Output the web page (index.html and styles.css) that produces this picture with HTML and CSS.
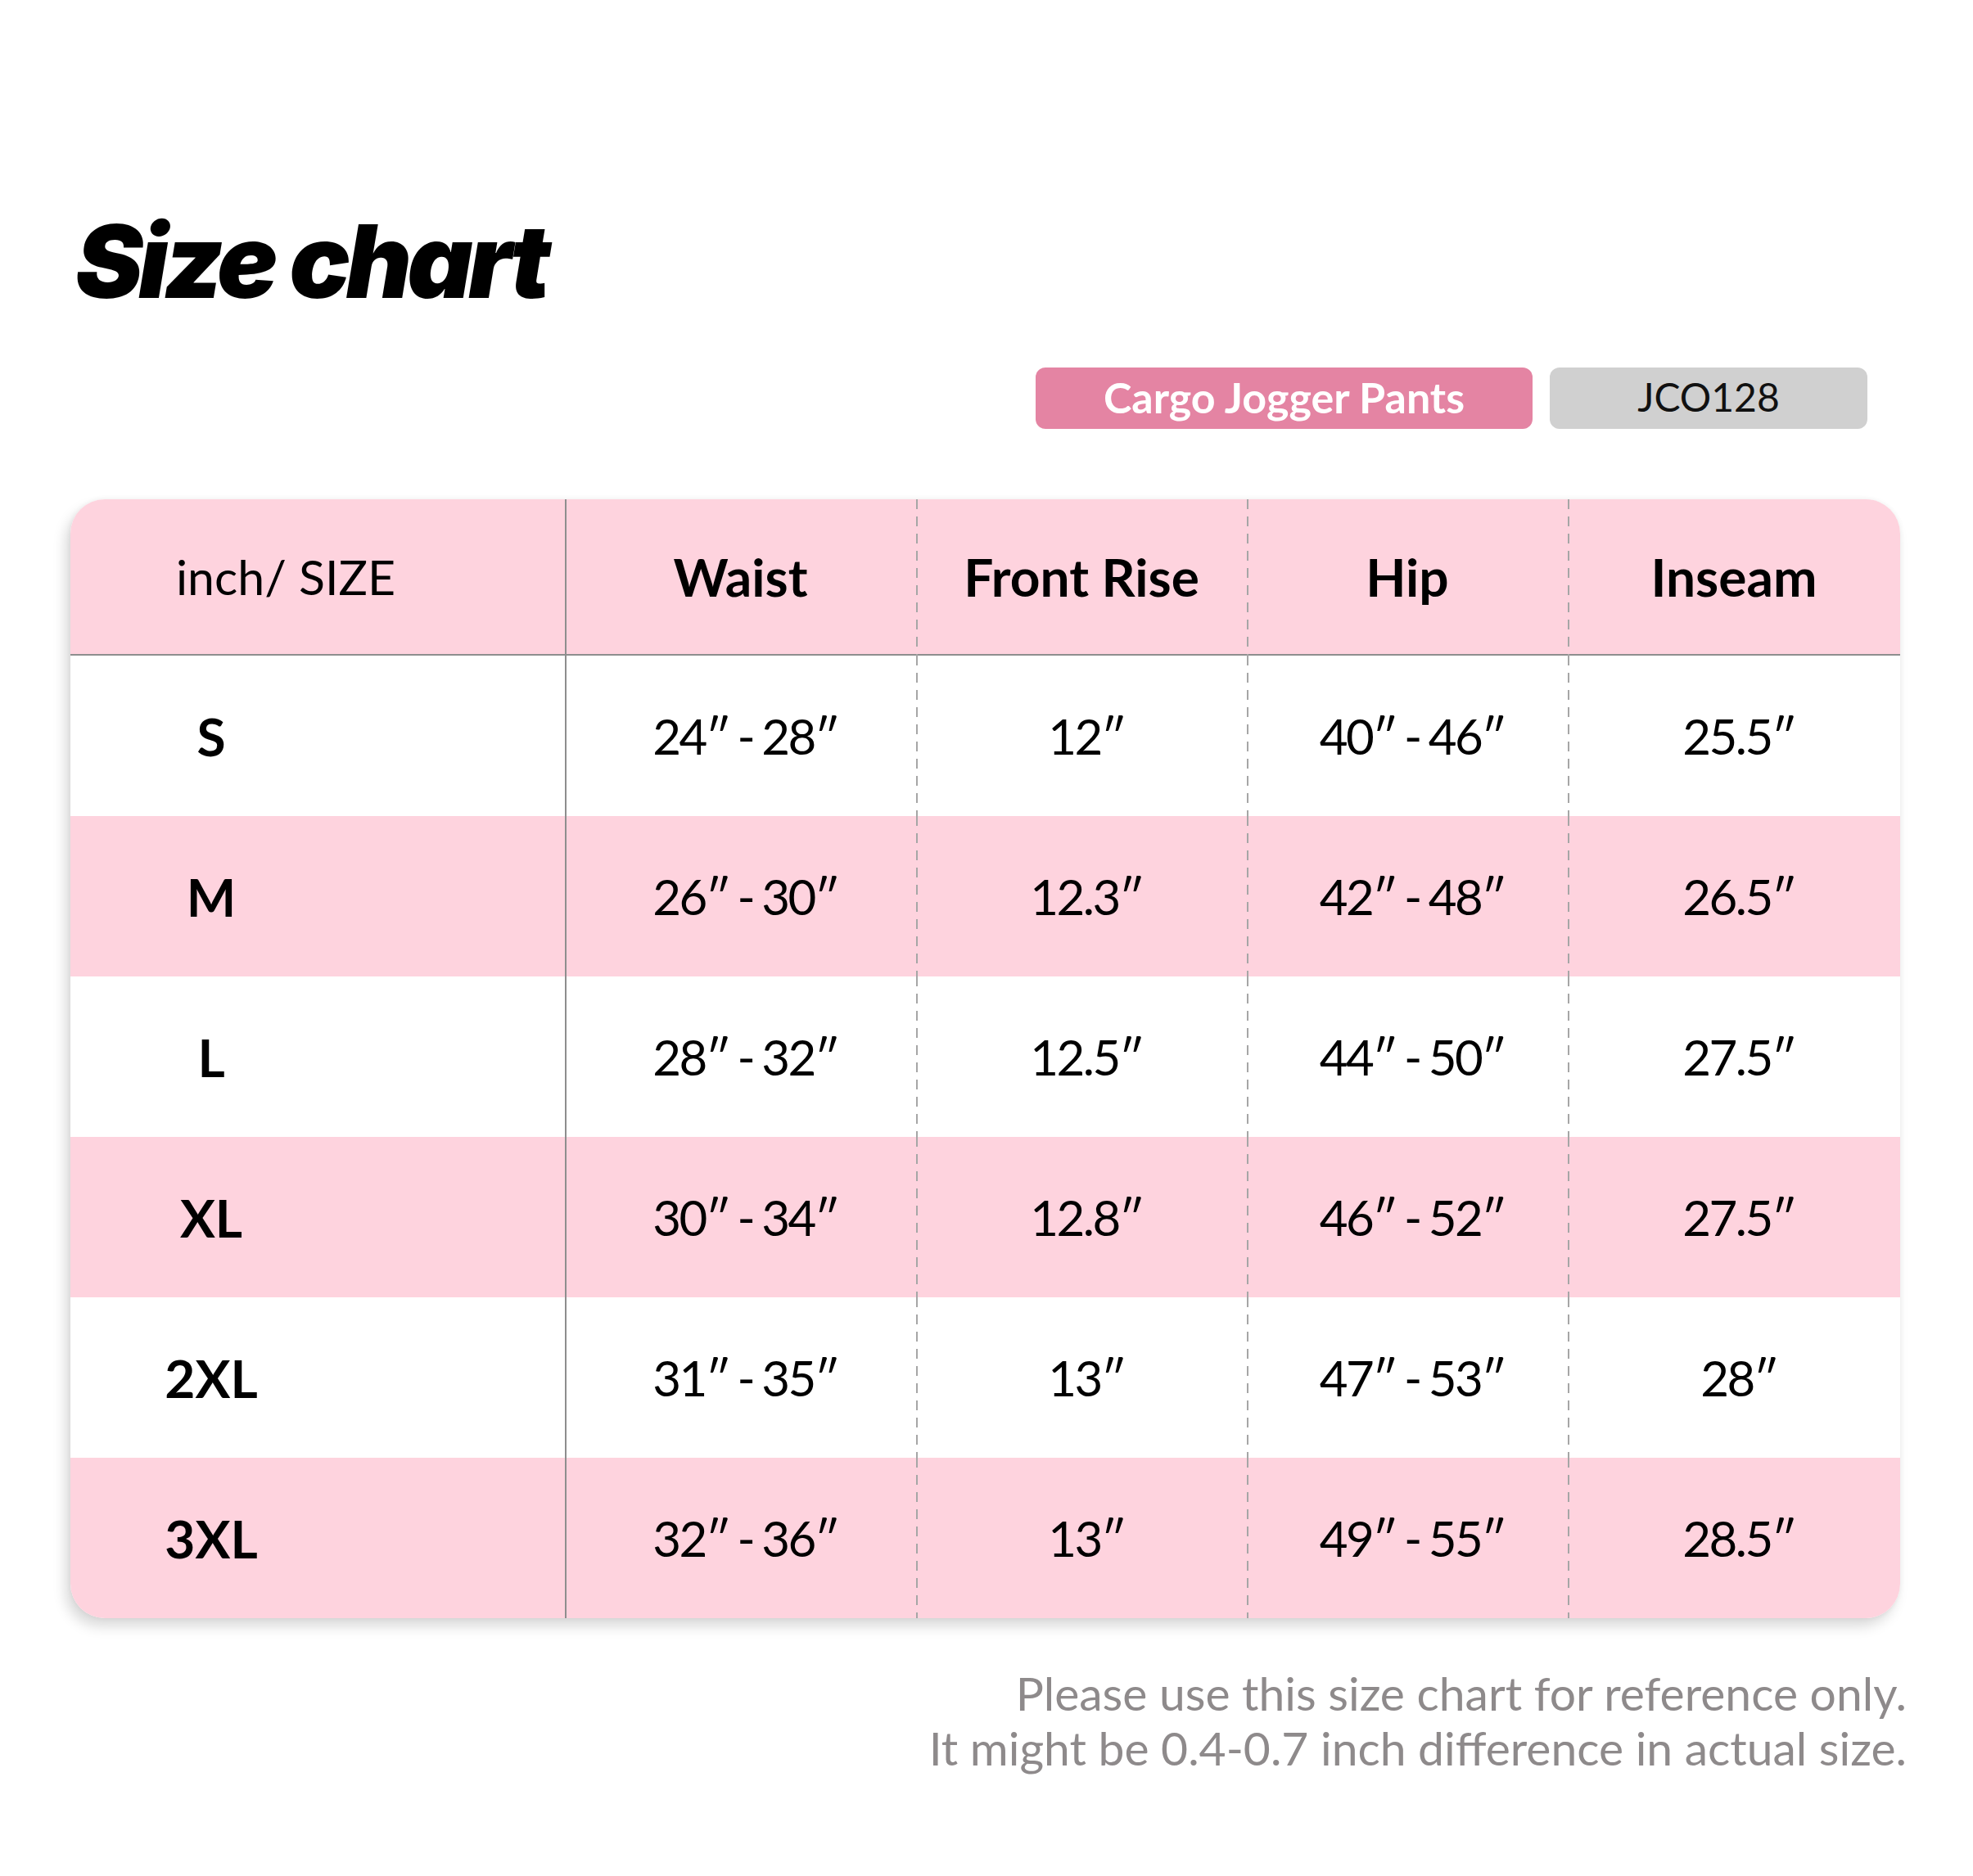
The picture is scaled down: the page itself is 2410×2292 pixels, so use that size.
FILE: index.html
```html
<!DOCTYPE html>
<html lang="en">
<head>
<meta charset="utf-8">
<title>Size chart</title>
<link rel="stylesheet" href="styles.css">
</head>
<body>
<main class="page">
  <h1 class="title">Size chart</h1>

  <div class="tags">
    <span class="tag tag-pink">Cargo Jogger Pants</span>
    <span class="tag tag-gray">JCO128</span>
  </div>

  <div class="chart">
    <div class="row head">
      <div class="cell first"><span class="unit">inch/ SIZE</span></div>
      <div class="cell solid">Waist</div>
      <div class="cell dash">Front Rise</div>
      <div class="cell dash">Hip</div>
      <div class="cell dash">Inseam</div>
    </div>
    <div class="row">
      <div class="cell first"><span class="size">S</span></div>
      <div class="cell solid">24″ - 28″</div>
      <div class="cell dash">12″</div>
      <div class="cell dash">40″ - 46″</div>
      <div class="cell dash">25.5″</div>
    </div>
    <div class="row pink">
      <div class="cell first"><span class="size">M</span></div>
      <div class="cell solid">26″ - 30″</div>
      <div class="cell dash">12.3″</div>
      <div class="cell dash">42″ - 48″</div>
      <div class="cell dash">26.5″</div>
    </div>
    <div class="row">
      <div class="cell first"><span class="size">L</span></div>
      <div class="cell solid">28″ - 32″</div>
      <div class="cell dash">12.5″</div>
      <div class="cell dash">44″ - 50″</div>
      <div class="cell dash">27.5″</div>
    </div>
    <div class="row pink">
      <div class="cell first"><span class="size">XL</span></div>
      <div class="cell solid">30″ - 34″</div>
      <div class="cell dash">12.8″</div>
      <div class="cell dash">46″ - 52″</div>
      <div class="cell dash">27.5″</div>
    </div>
    <div class="row">
      <div class="cell first"><span class="size">2XL</span></div>
      <div class="cell solid">31″ - 35″</div>
      <div class="cell dash">13″</div>
      <div class="cell dash">47″ - 53″</div>
      <div class="cell dash">28″</div>
    </div>
    <div class="row pink">
      <div class="cell first"><span class="size">3XL</span></div>
      <div class="cell solid">32″ - 36″</div>
      <div class="cell dash">13″</div>
      <div class="cell dash">49″ - 55″</div>
      <div class="cell dash">28.5″</div>
    </div>
  </div>

  <p class="note">Please use this size chart for reference only.<br>It might be 0.4-0.7 inch difference in actual size.</p>
</main>
</body>
</html>
```

FILE: styles.css
```css
html, body {
  margin: 0;
  padding: 0;
  background: #ffffff;
}

.page {
  width: 2410px;
  min-height: 2292px;
  padding-top: 257px;
  box-sizing: border-box;
  font-family: "Lato", "DejaVu Sans", sans-serif;
  color: #000;
}

.title {
  margin: 0 0 0 92px;
  font-family: "Inter", "Liberation Sans", sans-serif;
  font-weight: 900;
  font-style: italic;
  font-size: 124px;
  line-height: 124px;
  letter-spacing: -5.5px;
  color: #000;
}

.tags {
  display: flex;
  justify-content: flex-end;
  gap: 21px;
  margin-top: 68px;
  padding-right: 129px;
}

.tag {
  display: flex;
  align-items: center;
  justify-content: center;
  height: 75px;
  border-radius: 12px;
  font-size: 52px;
  line-height: 1;
  padding-bottom: 3px;
  box-sizing: border-box;
}

.tag-pink {
  width: 607px;
  background: #e484a3;
  color: #ffffff;
  font-weight: 700;
}

.tag-gray {
  width: 388px;
  background: #d0d0d0;
  color: #111;
  font-weight: 400;
  font-size: 48px;
}

.chart {
  margin: 86px 0 0 86px;
  width: 2235px;
  border-radius: 42px;
  overflow: hidden;
  background: #fff;
  box-shadow: -6px 10px 16px rgba(0, 0, 0, 0.15), 0 0 6px rgba(0, 0, 0, 0.06);
}

.row {
  display: grid;
  grid-template-columns: 604px 429px 404px 392px 406px;
  height: 196px;
  background: #ffffff;
  font-size: 60px;
  letter-spacing: -2.5px;
  word-spacing: -3px;
}

.row.pink,
.row.head {
  background: #fed3de;
}

.row.head {
  height: 189px;
  border-bottom: 2px solid #8e8e8e;
  font-size: 64px;
  font-weight: 700;
  letter-spacing: 0;
  word-spacing: 0;
}

.cell {
  position: relative;
  display: flex;
  align-items: center;
  justify-content: center;
}

.row:not(.head) .cell.solid,
.row:not(.head) .cell.dash {
  padding-left: 12px;
}

.cell.first {
  justify-content: flex-start;
}

.size {
  width: 344px;
  text-align: center;
  font-weight: 700;
  font-size: 64px;
  letter-spacing: 0;
}

.unit {
  width: 526px;
  text-align: center;
  font-weight: 400;
  font-size: 59px;
}

.cell.solid::before,
.cell.dash::before {
  content: "";
  position: absolute;
  left: 0;
  top: 0;
  bottom: 0;
  width: 2px;
}

.cell.solid::before {
  background: #8e8e8e;
}

.cell.dash::before {
  width: 1.5px;
  background-image: repeating-linear-gradient(to bottom, #a6a6a6 0 12px, transparent 12px 21px);
}

.row.head .cell::before {
  bottom: -2px;
}

.note {
  margin: 58px 0 0 0;
  padding-right: 81px;
  text-align: right;
  font-size: 57px;
  line-height: 67px;
  color: #8e8a8b;
}
```
